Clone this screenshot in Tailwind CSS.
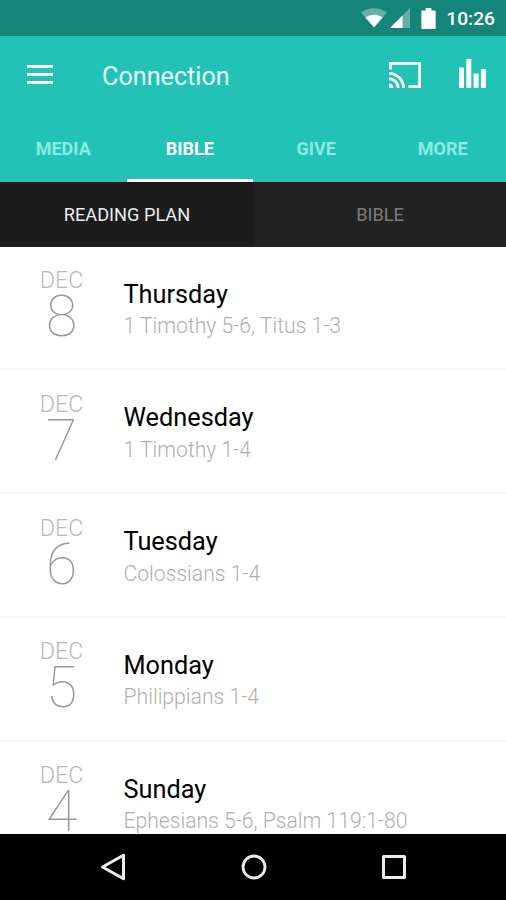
<!DOCTYPE html>
<html lang="en">
<head>
  <meta charset="UTF-8" />
  <meta name="viewport" content="width=device-width, initial-scale=1.0"/>
  <title>Connection</title>
  <script src="https://cdn.jsdelivr.net/npm/@tailwindcss/browser@4"></script>
</head>
<body class="bg-black font-['Roboto',sans-serif]">
  <div class="flex h-[900px] w-[506px] flex-col overflow-hidden bg-white">

    <!-- Status bar -->
    <div class="flex h-9 shrink-0 items-center justify-end bg-[#168579] pr-[11px] text-white">
      <svg class="mr-[3px] h-5 w-[26px]" viewBox="0 0 26 20" fill="currentColor">
        <path d="M0 4.5C7.500-1.300 18.500-1.300 26 4.500L13 19.500Z" opacity=".35"/>
        <path d="M4.500 9.500C9.500 5.800 16.500 5.800 21.500 9.500L13 19.500Z"/>
      </svg>
      <svg class="mr-[11px] h-5 w-5" viewBox="0 0 20 20" fill="currentColor">
        <path d="M20 0V20H0Z" opacity=".35"/>
        <path d="M12.500 7.500V20H0Z"/>
      </svg>
      <svg class="mr-[10px] h-[21px] w-[15px]" viewBox="0 0 15 22" fill="currentColor">
        <path d="M4.500 0H10.500V2.500H14Q15 2.500 15 3.500V21Q15 22 14 22H1Q0 22 0 21V3.500Q0 2.500 1 2.500H4.500Z"/>
      </svg>
      <span class="pt-[3px] text-[19.200px] font-medium">10:26</span>
    </div>

    <!-- App bar -->
    <header class="flex h-20 shrink-0 items-start bg-[#23c2b6] pr-5 pl-[27px] text-white">
      <svg class="mt-[29px] h-[19px] w-[26px]" viewBox="0 0 26 19" fill="currentColor">
        <path d="M0 0H26V3H0ZM0 8H26V11H0ZM0 16H26V19H0Z"/>
      </svg>
      <h1 class="ml-[49px] pt-[2px] text-[25.200px] leading-[78px] text-[#e6fffc]">Connection</h1>
      <svg class="mt-[26px] ml-auto h-[26px] w-8" viewBox="0 0 32 26" fill="none" stroke="currentColor" stroke-width="2.800">
        <path d="M1.400 7.500V1.400H30.600V24.600H19.500"/>
        <path d="M0 11.400A14.600 14.600 0 0 1 14.600 26M0 16.800A9.200 9.200 0 0 1 9.200 26"/>
        <path d="M0 21.500A4.500 4.500 0 0 1 4.500 26H0Z" fill="currentColor" stroke="none"/>
      </svg>
      <svg class="mt-[23px] ml-[38px] h-[29px] w-[27px]" viewBox="0 0 27 29" fill="currentColor">
        <rect x="0" y="8.500" width="5" height="20.500" rx=".8"/>
        <rect x="7.300" y="0" width="5" height="29" rx=".8"/>
        <rect x="14.600" y="14.500" width="5" height="14.500" rx=".8"/>
        <rect x="21.900" y="10" width="5" height="19" rx=".8"/>
      </svg>
    </header>

    <!-- Tabs -->
    <nav class="grid h-[66px] shrink-0 grid-cols-4 bg-[#23c2b6] text-center text-[18px] leading-[66px] font-bold text-[#89ebe3]">
      <a class="h-[66px]">MEDIA</a>
      <a class="h-[66px] border-b-[3px] border-white text-white">BIBLE</a>
      <a class="h-[66px]">GIVE</a>
      <a class="h-[66px]">MORE</a>
    </nav>

    <!-- Sub tabs -->
    <nav class="grid h-[64.500px] shrink-0 grid-cols-[254px_1fr] border-t border-[#101010] text-center text-[18.200px] leading-[64px]">
      <a class="bg-[#1c1c1c] text-[#ececec]">READING PLAN</a>
      <a class="bg-[#222222] text-[#7c7c7c]">BIBLE</a>
    </nav>

    <!-- Reading plan -->
    <ul class="h-[587px] shrink-0 overflow-hidden">
      <li class="flex h-[123.800px] border-b-2 border-[#f7f7f7]">
        <div class="w-[123px] pt-[20.500px] text-center font-light text-[#b9b9b9]">
          <div class="text-[23.300px] leading-[26px]">DEC</div>
          <div class="text-[57px] leading-[48px] font-thin text-[#999999]">8</div>
        </div>
        <div class="pt-8 pl-[.5px]">
          <div class="text-[25.300px] leading-[32.500px] text-black">Thursday</div>
          <div class="text-[21.150px] leading-[29px] font-light text-[#b0b0b0]">1 Timothy 5-6, Titus 1-3</div>
        </div>
      </li>
      <li class="flex h-[123.800px] border-b-2 border-[#f7f7f7]">
        <div class="w-[123px] pt-[20.500px] text-center font-light text-[#b9b9b9]">
          <div class="text-[23.300px] leading-[26px]">DEC</div>
          <div class="text-[57px] leading-[48px] font-thin text-[#999999]">7</div>
        </div>
        <div class="pt-8 pl-[.5px]">
          <div class="text-[25.300px] leading-[32.500px] text-black">Wednesday</div>
          <div class="text-[21.150px] leading-[29px] font-light text-[#b0b0b0]">1 Timothy 1-4</div>
        </div>
      </li>
      <li class="flex h-[123.800px] border-b-2 border-[#f7f7f7]">
        <div class="w-[123px] pt-[20.500px] text-center font-light text-[#b9b9b9]">
          <div class="text-[23.300px] leading-[26px]">DEC</div>
          <div class="text-[57px] leading-[48px] font-thin text-[#999999]">6</div>
        </div>
        <div class="pt-8 pl-[.5px]">
          <div class="text-[25.300px] leading-[32.500px] text-black">Tuesday</div>
          <div class="text-[21.150px] leading-[29px] font-light text-[#b0b0b0]">Colossians 1-4</div>
        </div>
      </li>
      <li class="flex h-[123.800px] border-b-2 border-[#f7f7f7]">
        <div class="w-[123px] pt-[20.500px] text-center font-light text-[#b9b9b9]">
          <div class="text-[23.300px] leading-[26px]">DEC</div>
          <div class="text-[57px] leading-[48px] font-thin text-[#999999]">5</div>
        </div>
        <div class="pt-8 pl-[.5px]">
          <div class="text-[25.300px] leading-[32.500px] text-black">Monday</div>
          <div class="text-[21.150px] leading-[29px] font-light text-[#b0b0b0]">Philippians 1-4</div>
        </div>
      </li>
      <li class="flex h-[123.800px] border-b-2 border-[#f7f7f7]">
        <div class="w-[123px] pt-[20.500px] text-center font-light text-[#b9b9b9]">
          <div class="text-[23.300px] leading-[26px]">DEC</div>
          <div class="text-[57px] leading-[48px] font-thin text-[#999999]">4</div>
        </div>
        <div class="pt-8 pl-[.5px]">
          <div class="text-[25.300px] leading-[32.500px] text-black">Sunday</div>
          <div class="text-[21.150px] leading-[29px] font-light text-[#b0b0b0]">Ephesians 5-6, Psalm 119:1-80</div>
        </div>
      </li>
    </ul>

    <!-- Navigation bar -->
    <div class="flex h-[66.500px] shrink-0 items-center justify-between bg-black px-[100px] text-[#ececec]">
      <svg class="h-7 w-[26px]" viewBox="0 0 26 28" fill="none" stroke="currentColor" stroke-width="3" stroke-linejoin="round">
        <path d="M2.500 14L23.500 2.300V25.700Z"/>
      </svg>
      <svg class="h-[26px] w-[26px]" viewBox="0 0 26 26" fill="none" stroke="currentColor" stroke-width="2.800">
        <circle cx="13" cy="13" r="11"/>
      </svg>
      <svg class="h-6 w-6" viewBox="0 0 24 24" fill="none" stroke="currentColor" stroke-width="3" stroke-linejoin="round">
        <rect x="1.500" y="1.500" width="21" height="21"/>
      </svg>
    </div>
  </div>
</body>
</html>
